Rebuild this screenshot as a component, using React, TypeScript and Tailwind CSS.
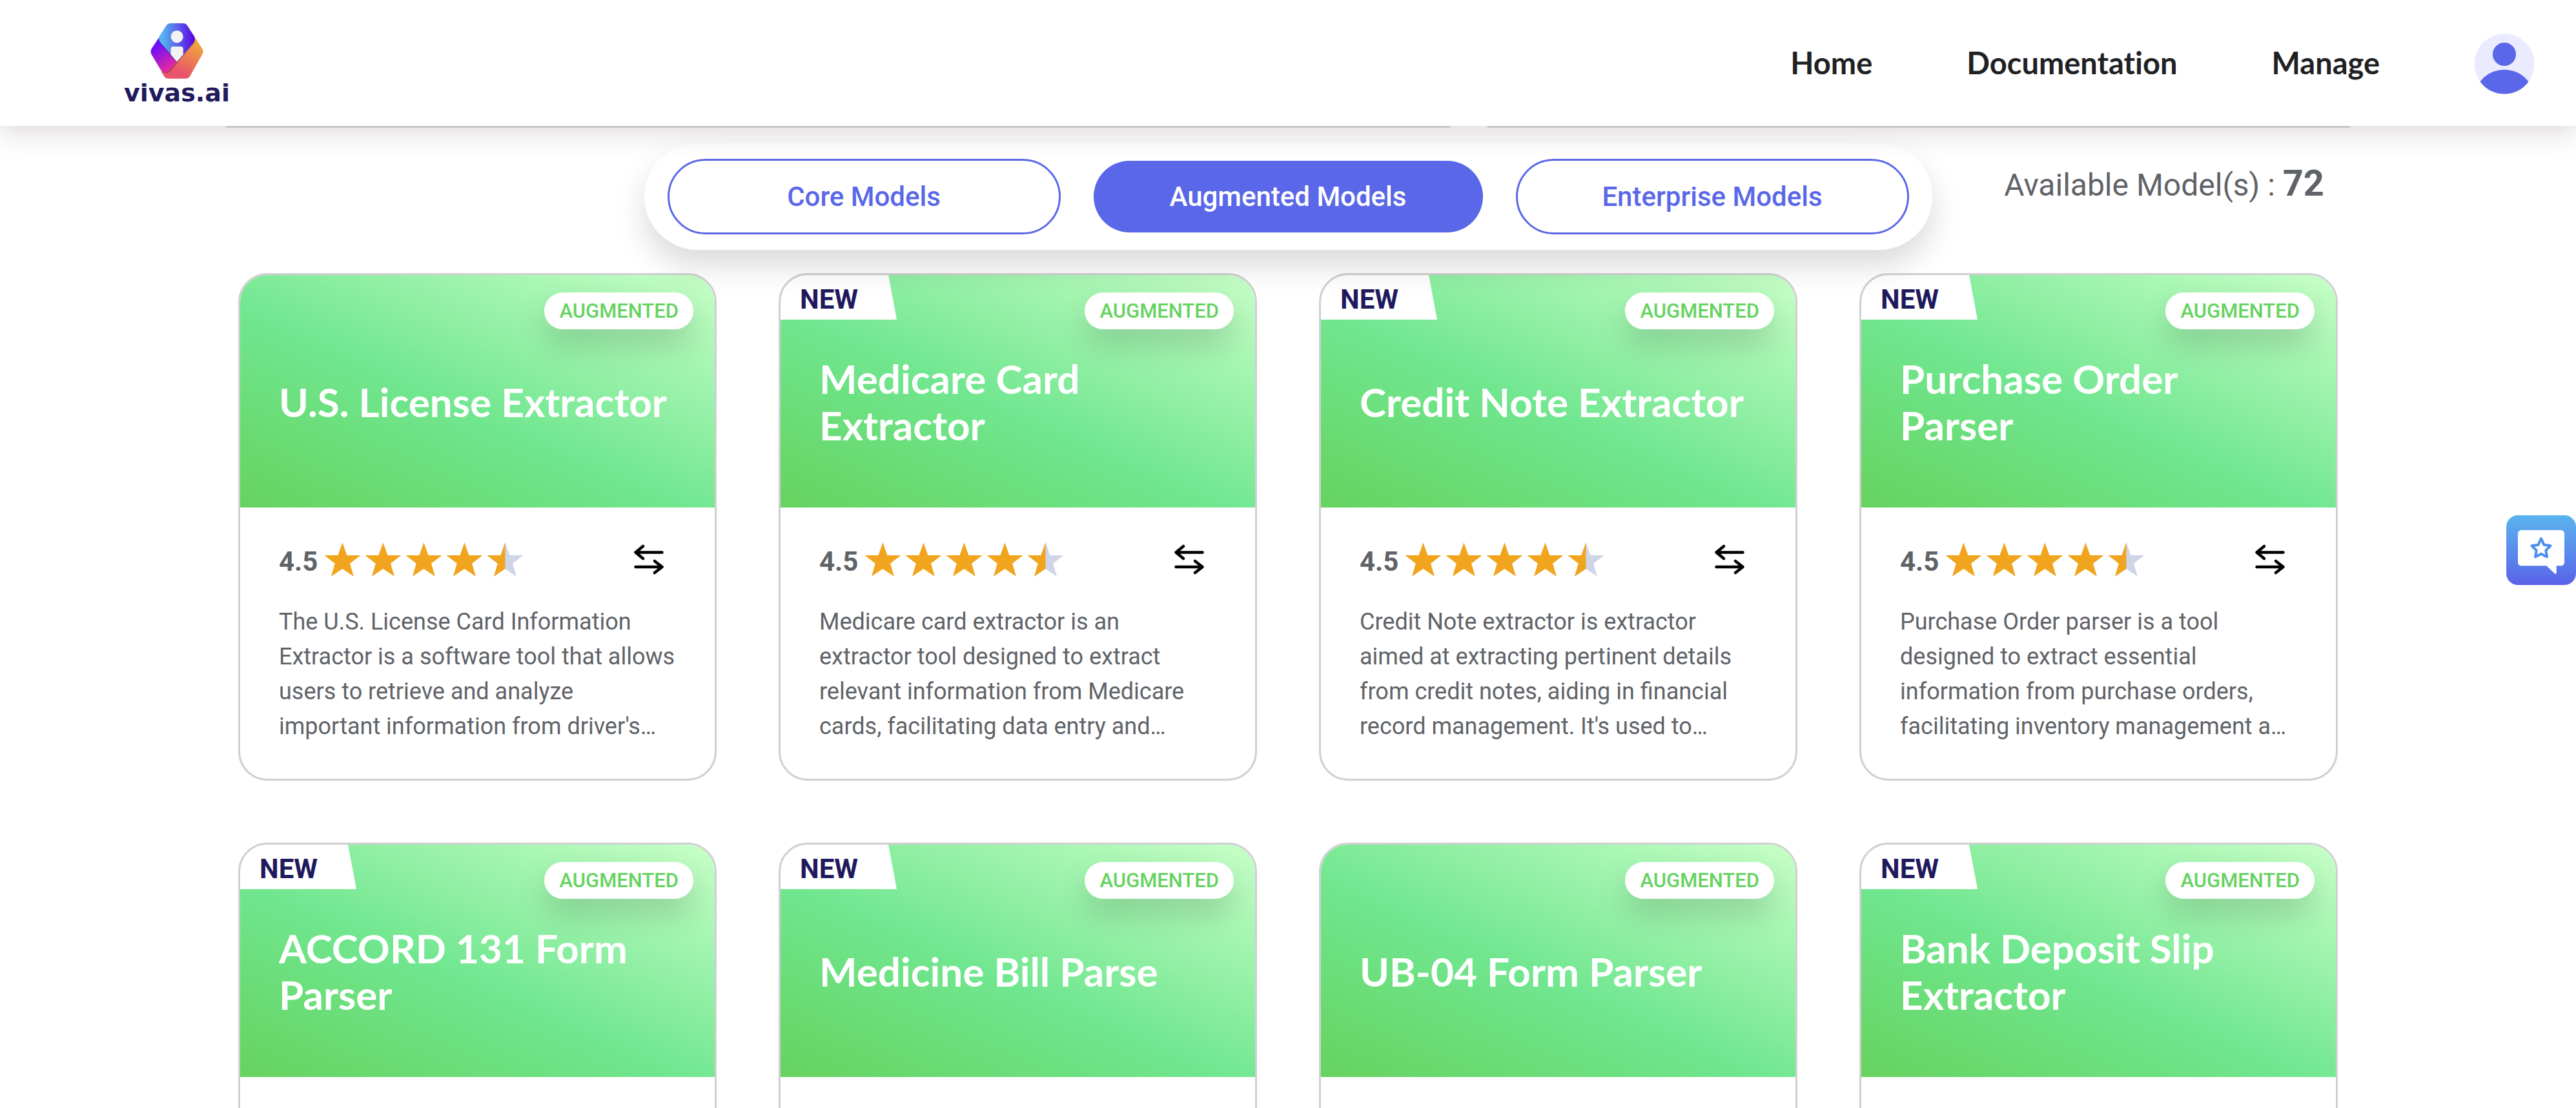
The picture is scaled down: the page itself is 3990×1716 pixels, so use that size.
import React from "react";

interface Model {
  id: number;
  title: string;
  isNew: boolean;
  rating?: number;
  description?: string;
}

const models: Model[] = [
  {
    id: 1,
    title: "U.S. License Extractor",
    isNew: false,
    rating: 4.5,
    description:
      "The U.S. License Card Information Extractor is a software tool that allows users to retrieve and analyze important information from driver's…",
  },
  {
    id: 2,
    title: "Medicare Card Extractor",
    isNew: true,
    rating: 4.5,
    description:
      "Medicare card extractor is an extractor tool designed to extract relevant information from Medicare cards, facilitating data entry and…",
  },
  {
    id: 3,
    title: "Credit Note Extractor",
    isNew: true,
    rating: 4.5,
    description:
      "Credit Note extractor is extractor aimed at extracting pertinent details from credit notes, aiding in financial record management. It's used to…",
  },
  {
    id: 4,
    title: "Purchase Order Parser",
    isNew: true,
    rating: 4.5,
    description:
      "Purchase Order parser is a tool designed to extract essential information from purchase orders, facilitating inventory management a…",
  },
  { id: 5, title: "ACCORD 131 Form Parser", isNew: true },
  { id: 6, title: "Medicine Bill Parse", isNew: true },
  { id: 7, title: "UB-04 Form Parser", isNew: false },
  { id: 8, title: "Bank Deposit Slip Extractor", isNew: true },
];

const tabs = ["Core Models", "Augmented Models", "Enterprise Models"];
const links = ["Home", "Documentation", "Manage"];

function Logo() {
  return (
    <a href="#" className="flex flex-col items-center gap-1">
      <svg viewBox="216 77 247 260" className="w-[82px] h-[86px]" aria-hidden="true">
        <defs>
          <linearGradient id="logoBlue" x1="0" y1="0" x2="1" y2="0">
            <stop offset="0.1" stopColor="#56b4ef" />
            <stop offset="0.6" stopColor="#5a51e8" />
            <stop offset="1" stopColor="#5a00e6" />
          </linearGradient>
          <linearGradient id="logoPurple" x1="0.2" y1="0.1" x2="0.7" y2="1">
            <stop offset="0.1" stopColor="#6a0cfb" />
            <stop offset="1" stopColor="#ee2a9c" />
          </linearGradient>
          <linearGradient id="logoOrange" x1="0.85" y1="0" x2="0.35" y2="1">
            <stop offset="0.1" stopColor="#efa83a" />
            <stop offset="0.85" stopColor="#e9536c" />
          </linearGradient>
        </defs>
        <path d="M423 142l35 54q8 14 0 28l-58 102q-6 10-18 10h-84q-12 0-18-10l-14-23 72-45z" fill="url(#logoOrange)" />
        <path d="M257 142l-36 54q-8 14 0 28l44 74q22 18 42 0l31-36 4-10z" fill="#000" opacity="0.2" transform="translate(3 4)" />
        <path d="M257 142l-36 54q-8 14 0 28l44 74q22 14 39-2l36-38z" fill="url(#logoPurple)" />
        <path
          d="M310 77h58q12 0 19 9l33 51q8 16-2 30l-78 91-78-91q-11-14-4-30l33-51q7-9 19-9z"
          fill="#1b1464"
          opacity="0.4"
          transform="translate(0 5)"
        />
        <path d="M310 77h58q12 0 19 9l33 51q8 16-2 30l-78 91-78-91q-11-14-4-30l33-51q7-9 19-9z" fill="url(#logoBlue)" />
        <circle cx="340" cy="140" r="29" fill="#f3f3f5" />
        <path d="M323 186h34q12 0 12 12v26l-30 34-28-34v-26q0-12 12-12z" fill="#f3f3f5" />
      </svg>
      <span className="font-['DejaVu_Sans'] font-bold text-[38px] leading-9 text-[#211a5c]">vivas.ai</span>
    </a>
  );
}

function Avatar() {
  return (
    <button type="button" aria-label="Account" className="rounded-full">
      <svg viewBox="0 0 94 94" className="size-[94px] block">
        <clipPath id="avatarClip">
          <circle cx="47" cy="47" r="46.5" />
        </clipPath>
        <g clipPath="url(#avatarClip)">
          <rect width="94" height="94" fill="#eaebff" />
          <circle cx="47" cy="32" r="18" fill="#5967e8" />
          <circle cx="47" cy="103.5" r="47.5" fill="#5967e8" />
        </g>
      </svg>
    </button>
  );
}

function Header() {
  return (
    <header className="relative z-20 flex items-center justify-between h-[195px] shrink-0 pl-[192px] pr-16 pt-[3px] bg-white shadow-[0_12px_36px_rgba(60,32,28,0.16)]">
      <Logo />
      <nav className="flex items-center gap-[146px]">
        {links.map((link) => (
          <a
            key={link}
            href="#"
            className="pb-1 font-[Lato] font-bold text-[47px] text-[#202124] [font-variant-ligatures:none]"
          >
            {link}
          </a>
        ))}
        <Avatar />
      </nav>
    </header>
  );
}

const starPath = "m25 1 6 17h18l-14 11 5 17-15-10-15 10 5-17-14-11h18z";

function Stars({ rating }: { rating: number }) {
  return (
    <div className="flex gap-[3px]" role="img" aria-label={`${rating} out of 5`}>
      {[0, 1, 2, 3, 4].map((i) => {
        const half = rating - i === 0.5;
        return (
          <svg key={i} viewBox="0 0 51 48" className="w-[60px] h-[56px]">
            <path d={starPath} fill={half ? "#cdd5e6" : "#f1a51e"} />
            {half && <path d="M25 1v35l-15 10 5-17-14-11h18z" fill="#f1a51e" />}
          </svg>
        );
      })}
    </div>
  );
}

function CompareButton({ title }: { title: string }) {
  return (
    <button type="button" aria-label={`Compare ${title}`} className="flex justify-center w-[84px]">
      <svg
        viewBox="15 17 60 60"
        className="size-[60px]"
        fill="none"
        stroke="#000"
        strokeWidth="4.5"
        strokeLinecap="round"
        strokeLinejoin="round"
      >
        <path d="M65.5 35.5h-41M36 26 24.5 35.5 36 45M24.5 35.5h6" />
        <path d="M24.5 58h41M54 49l11.5 9L54 67" />
      </svg>
    </button>
  );
}

function ModelCard({ model }: { model: Model }) {
  return (
    <article className="min-h-[786px] border-3 border-[#d0d0d0] rounded-[45px] overflow-hidden bg-white">
      <div className="relative flex items-center h-[360px] px-[60px] pt-8 bg-[linear-gradient(24deg,#66d35f,#70e68f_44%,#c8ffc8)]">
        {model.isNew && (
          <span className="absolute top-0 left-0 w-[180px] h-[69px] pl-[30px] bg-white [clip-path:polygon(0_0,167px_0,100%_100%,0_100%)] text-[42px] leading-[75px] font-bold text-[#1f1a5e]">
            NEW
          </span>
        )}
        <span className="absolute top-[27px] right-[33px] px-[23px] rounded-full bg-white text-[31px] leading-[57px] font-medium text-[#66d361] shadow-[0_24px_48px_rgba(0,0,0,0.15)]">
          AUGMENTED
        </span>
        <h2 className="font-[Lato] font-bold text-[62px] leading-[72px] text-white">{model.title}</h2>
      </div>
      <div className="px-[60px] pt-12 pb-[54px]">
        {model.rating && (
          <div className="flex items-center h-[66px]">
            <span className="mr-[9px] pt-1.5 text-[42px] leading-[60px] font-bold text-[#5f6368]">{model.rating}</span>
            <Stars rating={model.rating} />
            <div className="ml-auto">
              <CompareButton title={model.title} />
            </div>
          </div>
        )}
        {model.description && (
          <p className="mt-9 text-[36px] leading-[54px] text-[#5f6368]">{model.description}</p>
        )}
      </div>
    </article>
  );
}

function FeedbackButton() {
  return (
    <button
      type="button"
      aria-label="Feedback"
      className="fixed z-20 top-[798px] right-0 size-[108px] rounded-[18px] bg-linear-to-b from-[#59b4ee] to-[#5a62e8]"
    >
      <svg viewBox="0 0 324 324" className="size-[108px]">
        <rect x="54" y="69" width="216" height="166" rx="16" fill="#fff" />
        <path d="M186 234h47v35q-3 6-8 2z" fill="#fff" />
        <path
          d="M162 108l13.5 29.4 30.2 4.4-21.8 21.3 5.1 30.1-27-14.2-27 14.2 5.1-30.1-21.8-21.3 30.2-4.4z"
          fill="none"
          stroke="#4c8fed"
          strokeWidth="12"
          strokeLinejoin="round"
        />
      </svg>
    </button>
  );
}

export default function App() {
  const [active, setActive] = React.useState("Augmented Models");

  return (
    <div className="flex flex-col h-screen overflow-hidden bg-white font-[Roboto,sans-serif]">
      <Header />
      <main className="flex-1 min-h-0 overflow-hidden">
        {/* bottom edge of the filter boxes scrolled under the header */}
        <div className="grid grid-cols-[1898fr_1338fr] gap-14 px-[349px]">
          <div className="h-[3px] rounded-b-[3px] bg-[#dcdcdc]" />
          <div className="h-[3px] rounded-b-[3px] bg-[#dcdcdc]" />
        </div>

        <div className="relative z-10 grid grid-cols-[1fr_auto_1fr] mt-6">
          <div className="col-start-2 flex items-center gap-[51px] h-[165px] px-9 rounded-full bg-white shadow-[0_24px_48px_rgba(0,0,0,0.15)]">
            {tabs.map((tab) => (
              <button
                key={tab}
                type="button"
                onClick={() => setActive(tab)}
                className={
                  tab === active
                    ? "w-[603px] h-[111px] rounded-full bg-[#5967e8] text-[42px] font-medium text-white"
                    : "w-[609px] h-[117px] rounded-full border-3 border-[#5967e8] bg-white text-[42px] font-medium text-[#5967e8]"
                }
              >
                {tab}
              </button>
            ))}
          </div>
          <p className="justify-self-end mt-[26px] pr-[390px] text-[48px] leading-[72px] text-[#5f6368] whitespace-nowrap">
            Available Model(s) : <span className="text-[56px] font-bold">{72}</span>
          </p>
        </div>

        <section className="grid grid-cols-4 gap-24 mt-9 px-[369px]">
          {models.map((model) => (
            <ModelCard key={model.id} model={model} />
          ))}
        </section>
      </main>
      <FeedbackButton />
    </div>
  );
}
